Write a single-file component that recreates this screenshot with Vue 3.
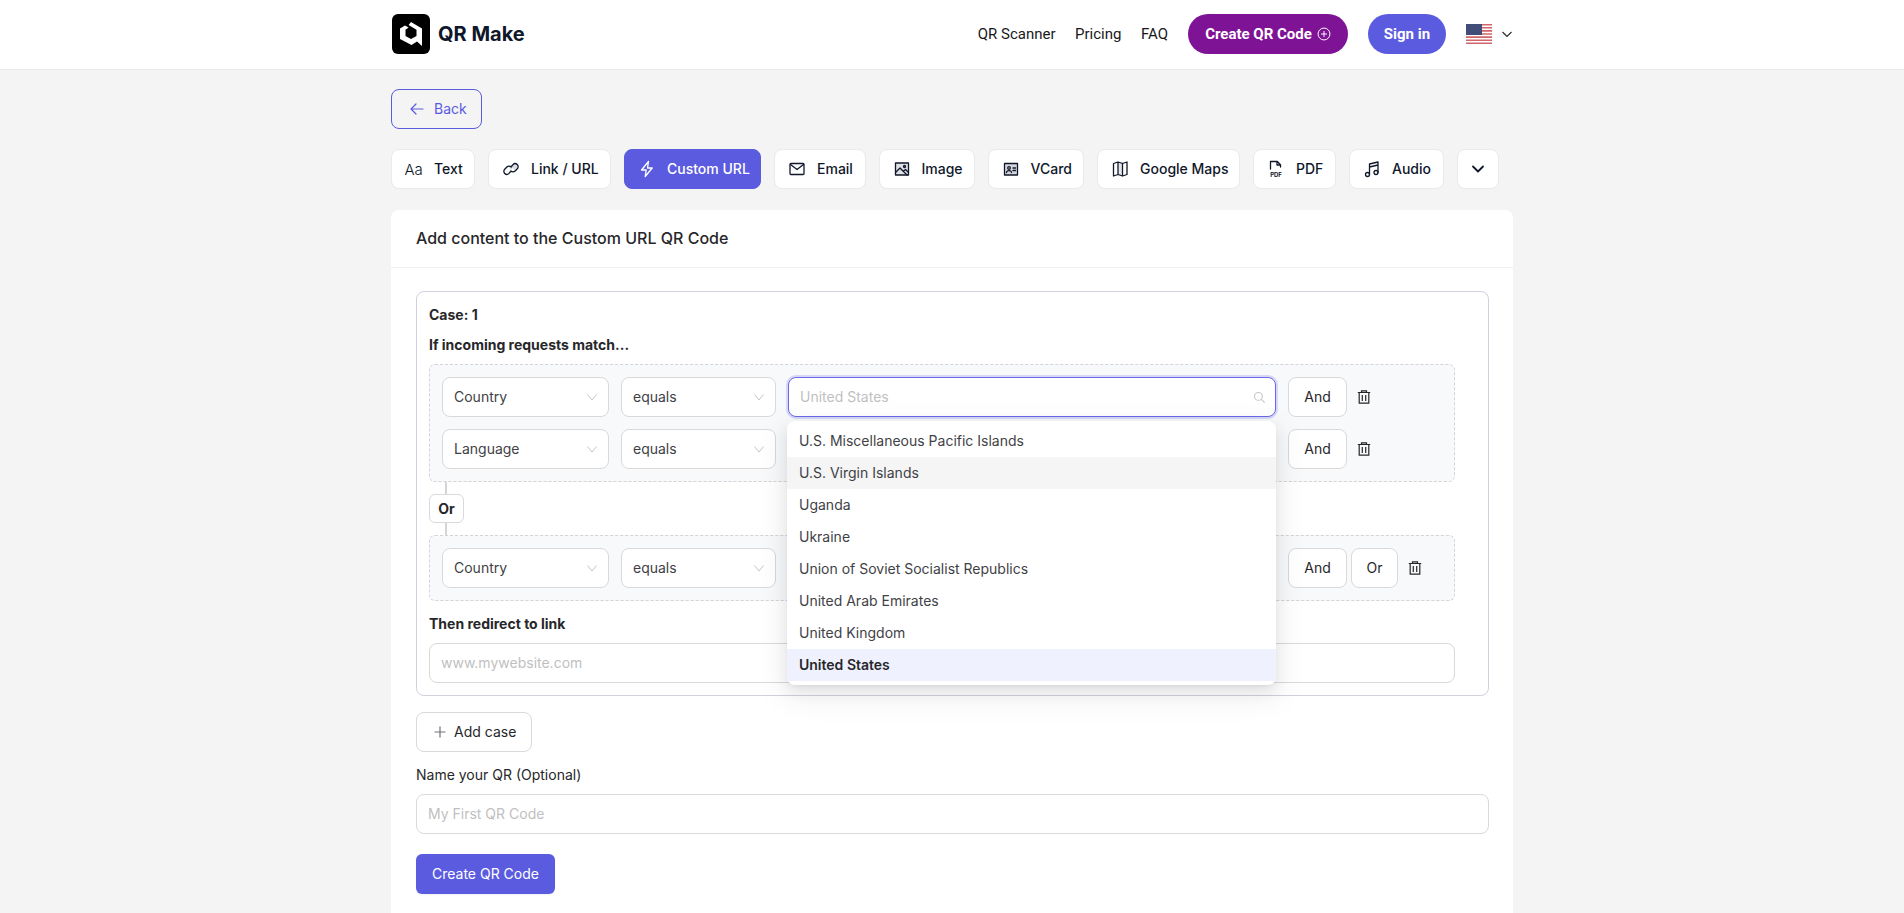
<script setup>
const tabs = [
  { name: 'Text', icon: 'text', width: 84 },
  { name: 'Link / URL', icon: 'link', width: 123 },
  { name: 'Custom URL', icon: 'bolt', width: 137, active: true },
  { name: 'Email', icon: 'mail', width: 91.5 },
  { name: 'Image', icon: 'image', width: 96 },
  { name: 'VCard', icon: 'card', width: 96.5 },
  { name: 'Google Maps', icon: 'map', width: 143 },
  { name: 'PDF', icon: 'pdf', width: 83 },
  { name: 'Audio', icon: 'audio', width: 95 },
]
const options = [
  'U.S. Miscellaneous Pacific Islands',
  'U.S. Virgin Islands',
  'Uganda',
  'Ukraine',
  'Union of Soviet Socialist Republics',
  'United Arab Emirates',
  'United Kingdom',
  'United States',
]
</script>

<template>
  <div class="page">
    <header class="header">
      <div class="wrap header-row">
        <div class="brand">
          <svg class="logo" viewBox="0 0 38 40" width="38" height="40">
            <rect width="38" height="40" rx="6" fill="#000" />
            <path fill="#fff" fill-rule="evenodd" d="M19 8 30 14.500V32L25 27.500 19.500 31 8 25V14.500L13 11.500 16.600 13.600 13.500 15.800V22L19 25 24.500 22V15.800L16.600 11Z" />
          </svg>
          <span class="brand-name">QR Make</span>
        </div>
        <nav class="nav">
          <a class="nav-link">QR Scanner</a>
          <a class="nav-link">Pricing</a>
          <a class="nav-link last">FAQ</a>
          <a class="pill pill-purple">
            Create QR Code
            <svg viewBox="0 0 16 16" width="14" height="14" fill="none" stroke="currentColor" stroke-width="1.100">
              <circle cx="8" cy="8" r="6.800" />
              <path d="M8 4.600v6.800M4.600 8h6.800" />
            </svg>
          </a>
          <a class="pill pill-blue">Sign in</a>
          <div class="lang">
            <svg class="flag" viewBox="0 0 26 20" width="26" height="20">
              <defs>
                <pattern id="stars" width="2" height="2" patternUnits="userSpaceOnUse">
                  <rect width="2" height="2" fill="#33406e" />
                  <circle cx="1" cy="1" r=".45" fill="#a9b0c8" />
                </pattern>
              </defs>
              <rect width="26" height="20" fill="#fff" />
              <path fill="#d1656b" d="M0 0h26v1.600H0zM0 3h26v1.600H0zM0 6.100h26v1.600H0zM0 9.200h26v1.600H0zM0 12.300h26v1.600H0zM0 15.400h26V17H0zM0 18.400h26V20H0z" />
              <rect width="16" height="11" fill="url(#stars)" />
            </svg>
            <svg viewBox="0 0 12 12" width="12" height="12" fill="none" stroke="#27272a" stroke-width="1.100">
              <path d="M1.500 4 6 8.500 10.500 4" />
            </svg>
          </div>
        </nav>
      </div>
    </header>

    <main class="wrap main">
      <button class="back">
        <svg viewBox="0 0 16 16" width="16" height="16" fill="none" stroke="currentColor" stroke-width="1.200" stroke-linecap="round" stroke-linejoin="round">
          <path d="M14 8H2.400M7 3 2 8l5 5" />
        </svg>
        Back
      </button>

      <div class="tabs">
        <div v-for="t in tabs" :key="t.name" class="tab" :class="{ active: t.active }" :style="{ width: t.width + 'px' }">
          <svg class="tab-icon" viewBox="0 0 20 20" width="20" height="20" fill="none" stroke="currentColor" stroke-width="1.300" stroke-linejoin="round" stroke-linecap="round">
            <template v-if="t.icon === 'text'">
              <text x="0.500" y="15.500" class="aa" fill="currentColor" stroke="none">Aa</text>
            </template>
            <template v-else-if="t.icon === 'link'">
              <path fill="#c9ccd4" d="M8 8.500 11.700 4.900a2.900 2.900 0 0 1 4.100 4.100L13.900 11l-2-2-2 2z" stroke="none" opacity=".7" />
              <path d="M10.600 7.200 12 5.600a3 3 0 0 1 4.300 4.200l-2.200 2.200a3 3 0 0 1-4.300 0" />
              <path d="M9.400 12.800 8 14.400a3 3 0 0 1-4.300-4.200L5.900 8a3 3 0 0 1 4.300 0" />
            </template>
            <template v-else-if="t.icon === 'bolt'">
              <path d="M11.500 2.500 4.500 11h4.700l-1 6.500 7-8.500h-4.700z" />
            </template>
            <template v-else-if="t.icon === 'mail'">
              <rect x="3" y="4.500" width="14" height="11" rx="1" />
              <path d="m3.500 5.500 6.500 5 6.500-5" />
            </template>
            <template v-else-if="t.icon === 'image'">
              <rect x="3.500" y="4" width="13" height="12" fill="#dfe1e6" />
              <path d="M3.500 13.500 8 9l7 7M11.500 12l2-1.500 3 3" />
              <circle cx="12.500" cy="7.500" r="1" />
            </template>
            <template v-else-if="t.icon === 'card'">
              <rect x="3.500" y="4.500" width="13" height="11.500" fill="#d4d6dc" />
              <circle cx="8" cy="9" r="1.300" />
              <path d="M5.500 13.500c.3-2.600 4.700-2.600 5 0M12 9h2.500M12 11.500h2.500" />
            </template>
            <template v-else-if="t.icon === 'map'">
              <path fill="#e5e7eb" d="M8 5 12.500 3v12L8 17z" stroke="none" />
              <path d="M3.500 4.500 8 3l4.500 1.500L17 3v12.500L12.500 17 8 15.500 3.500 17zM8 3v12.500M12.500 4.500V17" />
            </template>
            <template v-else-if="t.icon === 'pdf'">
              <path d="M4.500 10V2.500h6.800l3.200 3.200V8M11 2.500V6h3.500" />
              <text x="10" y="17.500" class="pdf-label" text-anchor="middle" fill="currentColor" stroke="none">PDF</text>
            </template>
            <template v-else-if="t.icon === 'audio'">
              <circle cx="5.500" cy="15.500" r="2" />
              <circle cx="14" cy="13.500" r="2" />
              <path d="M7.500 15.500V5l8.500-2v10.500M7.500 8 16 6" />
            </template>
          </svg>
          <span>{{ t.name }}</span>
        </div>
        <div class="tab tab-more">
          <svg viewBox="0 0 16 16" width="16" height="16" fill="none" stroke="currentColor" stroke-width="1.800" stroke-linecap="round" stroke-linejoin="round">
            <path d="m3 5.500 5 5 5-5" />
          </svg>
        </div>
      </div>

      <section class="card">
        <h2 class="card-title">Add content to the Custom URL QR Code</h2>
        <div class="card-body">
          <div class="case">
            <div class="case-label">Case: 1</div>
            <div class="strong if-label">If incoming requests match...</div>

            <div class="group">
              <div class="row">
                <div class="control sel-a">Country
                  <svg class="chev" viewBox="0 0 12 12" width="12" height="12" fill="none" stroke="currentColor"><path d="M1.500 3.500 6 9l4.500-5.500" /></svg>
                </div>
                <div class="control sel-b">equals
                  <svg class="chev" viewBox="0 0 12 12" width="12" height="12" fill="none" stroke="currentColor"><path d="M1.500 3.500 6 9l4.500-5.500" /></svg>
                </div>
                <div class="search-box">
                  <div class="control focused">
                    <span class="placeholder">United States</span>
                    <svg class="chev search-ico" viewBox="0 0 12 12" width="12" height="12" fill="none" stroke="currentColor"><circle cx="5" cy="5" r="3.600" /><path d="m7.800 7.800 3 3" /></svg>
                  </div>
                  <ul class="dropdown">
                    <li v-for="(o, i) in options" :key="o" class="option" :class="{ hover: i === 1, selected: i === 7 }">{{ o }}</li>
                  </ul>
                </div>
                <button class="btn-small and">And</button>
                <svg class="trash" viewBox="0 0 16 16" width="16" height="16" fill="none" stroke="#27272a" stroke-width="1.200"><path d="M1.800 3.500h12.400M5.500 3.500V1.800h5v1.700M3.200 3.500v10.700h9.600V3.500M6.300 6v6M9.700 6v6" /></svg>
              </div>
              <div class="row">
                <div class="control sel-a">Language
                  <svg class="chev" viewBox="0 0 12 12" width="12" height="12" fill="none" stroke="currentColor"><path d="M1.500 3.500 6 9l4.500-5.500" /></svg>
                </div>
                <div class="control sel-b">equals
                  <svg class="chev" viewBox="0 0 12 12" width="12" height="12" fill="none" stroke="currentColor"><path d="M1.500 3.500 6 9l4.500-5.500" /></svg>
                </div>
                <div class="control sel-c"></div>
                <button class="btn-small and">And</button>
                <svg class="trash" viewBox="0 0 16 16" width="16" height="16" fill="none" stroke="#27272a" stroke-width="1.200"><path d="M1.800 3.500h12.400M5.500 3.500V1.800h5v1.700M3.200 3.500v10.700h9.600V3.500M6.300 6v6M9.700 6v6" /></svg>
              </div>
            </div>

            <div class="connector">
              <span class="line"></span>
              <span class="or-badge">Or</span>
              <span class="line"></span>
            </div>

            <div class="group">
              <div class="row">
                <div class="control sel-a">Country
                  <svg class="chev" viewBox="0 0 12 12" width="12" height="12" fill="none" stroke="currentColor"><path d="M1.500 3.500 6 9l4.500-5.500" /></svg>
                </div>
                <div class="control sel-b">equals
                  <svg class="chev" viewBox="0 0 12 12" width="12" height="12" fill="none" stroke="currentColor"><path d="M1.500 3.500 6 9l4.500-5.500" /></svg>
                </div>
                <div class="control sel-c"></div>
                <div class="btn-pair">
                  <button class="btn-small and">And</button>
                  <button class="btn-small or">Or</button>
                </div>
                <svg class="trash" viewBox="0 0 16 16" width="16" height="16" fill="none" stroke="#27272a" stroke-width="1.200"><path d="M1.800 3.500h12.400M5.500 3.500V1.800h5v1.700M3.200 3.500v10.700h9.600V3.500M6.300 6v6M9.700 6v6" /></svg>
              </div>
            </div>

            <div class="strong then-label">Then redirect to link</div>
            <input class="text-input link-input" placeholder="www.mywebsite.com" />
          </div>

          <button class="add-case">
            <svg viewBox="0 0 14 14" width="14" height="14" fill="none" stroke="#71717a" stroke-width="1.200"><path d="M7 1.500v11M1.500 7h11" /></svg>
            Add case
          </button>
          <label class="name-label">Name your QR (Optional)</label>
          <input class="text-input name-input" placeholder="My First QR Code" />
          <button class="submit">Create QR Code</button>
        </div>
      </section>
    </main>
  </div>
</template>

<style>
html, body { margin: 0; overflow: hidden; background: #f4f4f5; }
</style>

<style scoped>
.page {
  min-height: 913px;
  background: #f4f4f5;
  font-family: Inter, "Liberation Sans", sans-serif;
  font-size: 14px;
  line-height: 20px;
  color: #27272a;
}
.wrap { width: 1122px; margin: 0 auto; }
.header { height: 69px; background: #fff; border-bottom: 1px solid #e9e9eb; }
.header-row { display: flex; justify-content: space-between; align-items: center; height: 68px; }
.brand { display: flex; align-items: center; gap: 8px; padding-left: 1px; }
.logo { display: block; }
.brand-name { font-size: 20px; line-height: 26px; font-weight: 700; color: #0f172a; }
.nav { display: flex; align-items: center; font-family: Roboto, sans-serif; color: #18181b; }
.nav-link { margin-right: 19.500px; font-size: 15px; }
.nav-link.last { margin-right: 20px; }
.pill {
  display: flex; align-items: center; justify-content: center; gap: 5px;
  height: 40px; border-radius: 20px; color: #fff; white-space: nowrap;
  font-size: 15px; font-weight: 700;
}
.pill svg { flex: none; }
.pill-purple { background: #7e1396; width: 160px; }
.pill-blue { background: #5b5bdf; margin-left: 20px; width: 78px; }
.lang { display: flex; align-items: center; gap: 9px; margin-left: 20px; }
.flag { display: block; }

.main { padding-top: 19px; }
.back {
  display: flex; align-items: center; gap: 9px;
  width: 91px; height: 40px; padding: 0 12px 0 17px; box-sizing: border-box;
  border: 1px solid #5b5bdf; border-radius: 8px; background: transparent;
  color: #5b5bdf; font: inherit; white-space: nowrap;
}
.back svg { flex: none; }
.tabs { display: flex; gap: 13px; margin-top: 20px; }
.tab {
  display: flex; align-items: center; gap: 10px;
  height: 40px; padding: 0 0 0 12px; box-sizing: border-box; white-space: nowrap;
  background: #fff; border: 1px solid #e9e9ee; border-radius: 8px;
  color: #0f172a; font-weight: 500;
}
.tab.active { background: #5b5bdf; border-color: #5b5bdf; color: #fff; }
.tab-icon { flex: none; display: block; }
.tab-more { padding: 0; width: 42px; justify-content: center; }
.aa { font-family: Inter, sans-serif; font-size: 15px; font-weight: 300; }
.pdf-label { font-family: Inter, sans-serif; font-size: 6px; font-weight: 700; }

.card { margin-top: 21px; background: #fff; border-radius: 8px 8px 0 0; }
.card-title {
  margin: 0; height: 58px; box-sizing: border-box; padding: 0 25px 1px;
  display: flex; align-items: center;
  border-bottom: 1px solid #f0f0f2;
  font-size: 16px; font-weight: 500; color: #27272a;
}
.card-body { padding: 23px 24px 24px 25px; display: flex; flex-direction: column; align-items: flex-start; }
.case {
  width: 100%; box-sizing: border-box;
  border: 1px solid #cfd2dc; border-radius: 8px;
  padding: 13px 33px 12px 12px;
}
.case-label, .strong { font-weight: 700; color: #27272a; }
.if-label { margin: 10px 0 9px; }
.group {
  border: 1px dashed #d4d4d8; border-radius: 6px; background: #f8f9fb;
  padding: 12px 0 12px 12px;
  display: flex; flex-direction: column; gap: 12px;
}
.row { display: flex; align-items: center; gap: 12px; height: 40px; }
.control {
  position: relative;
  display: flex; align-items: center; height: 40px; box-sizing: border-box;
  padding: 0 11px; border: 1px solid #d9d9d9; border-radius: 8px;
  background: #fff; color: #3f3f46;
}
.sel-a { width: 167px; flex: none; }
.sel-b { width: 155px; flex: none; }
.sel-c { width: 488px; flex: none; }
.search-box { position: relative; width: 488px; flex: none; }
.focused { border-color: #6a6ae8; box-shadow: 0 0 0 2px rgba(99, 102, 241, .22); }
.placeholder { color: #bfbfbf; }
.chev { position: absolute; right: 10px; top: 13px; color: #c4c4c8; }
.search-ico { width: 13px; height: 13px; right: 9px; }
.dropdown {
  position: absolute; z-index: 5; left: -1px; top: 44px;
  width: 489px; margin: 0; padding: 4px 0; box-sizing: border-box; list-style: none;
  background: #fff; border-radius: 8px;
  box-shadow: 0 6px 16px rgba(0,0,0,.08), 0 3px 6px -4px rgba(0,0,0,.12), 0 9px 28px 8px rgba(0,0,0,.05);
}
.option { height: 32px; line-height: 32px; padding: 0 12px; color: #3f3f46; }
.option.hover { background: #f5f5f5; }
.option.selected { background: #eff2fe; font-weight: 600; color: #27272a; }
.btn-small {
  flex: none; height: 40px; box-sizing: border-box;
  border: 1px solid #d9d9d9; border-radius: 8px; background: #fff;
  font: inherit; color: #27272a; padding: 0;
}
.and { width: 59px; }
.or { width: 47px; }
.btn-pair { display: flex; gap: 4px; }
.trash { flex: none; margin-left: -3px; }
.connector { display: flex; flex-direction: column; align-items: flex-start; }
.line { width: 2px; height: 12px; background: #d4d4d8; margin-left: 16px; }
.or-badge {
  width: 35px; height: 29px; box-sizing: border-box;
  display: flex; align-items: center; justify-content: center;
  border: 1px solid #d9d9de; border-radius: 6px; background: #fff;
  font-weight: 700; color: #27272a;
}
.then-label { margin: 13px 0 9px; }
.text-input {
  display: block; width: 100%; height: 40px; box-sizing: border-box;
  padding: 0 11px 2px; border: 1px solid #d9d9d9; border-radius: 8px;
  background: #fff; font: inherit; color: #27272a; outline: none;
}
.text-input::placeholder { color: #bfbfbf; }
.add-case {
  display: flex; align-items: center; gap: 7px;
  margin-top: 16px; width: 116px; height: 40px; box-sizing: border-box; padding: 0 0 0 16px;
  border: 1px solid #d9d9d9; border-radius: 8px; background: #fff;
  font: inherit; color: #27272a; white-space: nowrap;
}
.add-case svg { flex: none; }
.name-label { margin: 13px 0 9px; color: #27272a; }
.submit {
  margin-top: 20px; width: 139px; height: 40px;
  border: 0; border-radius: 6px; background: #5b5bdf; color: #fff; font: inherit; padding: 0;
  box-shadow: 0 1px 2px rgba(0,0,0,.06);
}
</style>
